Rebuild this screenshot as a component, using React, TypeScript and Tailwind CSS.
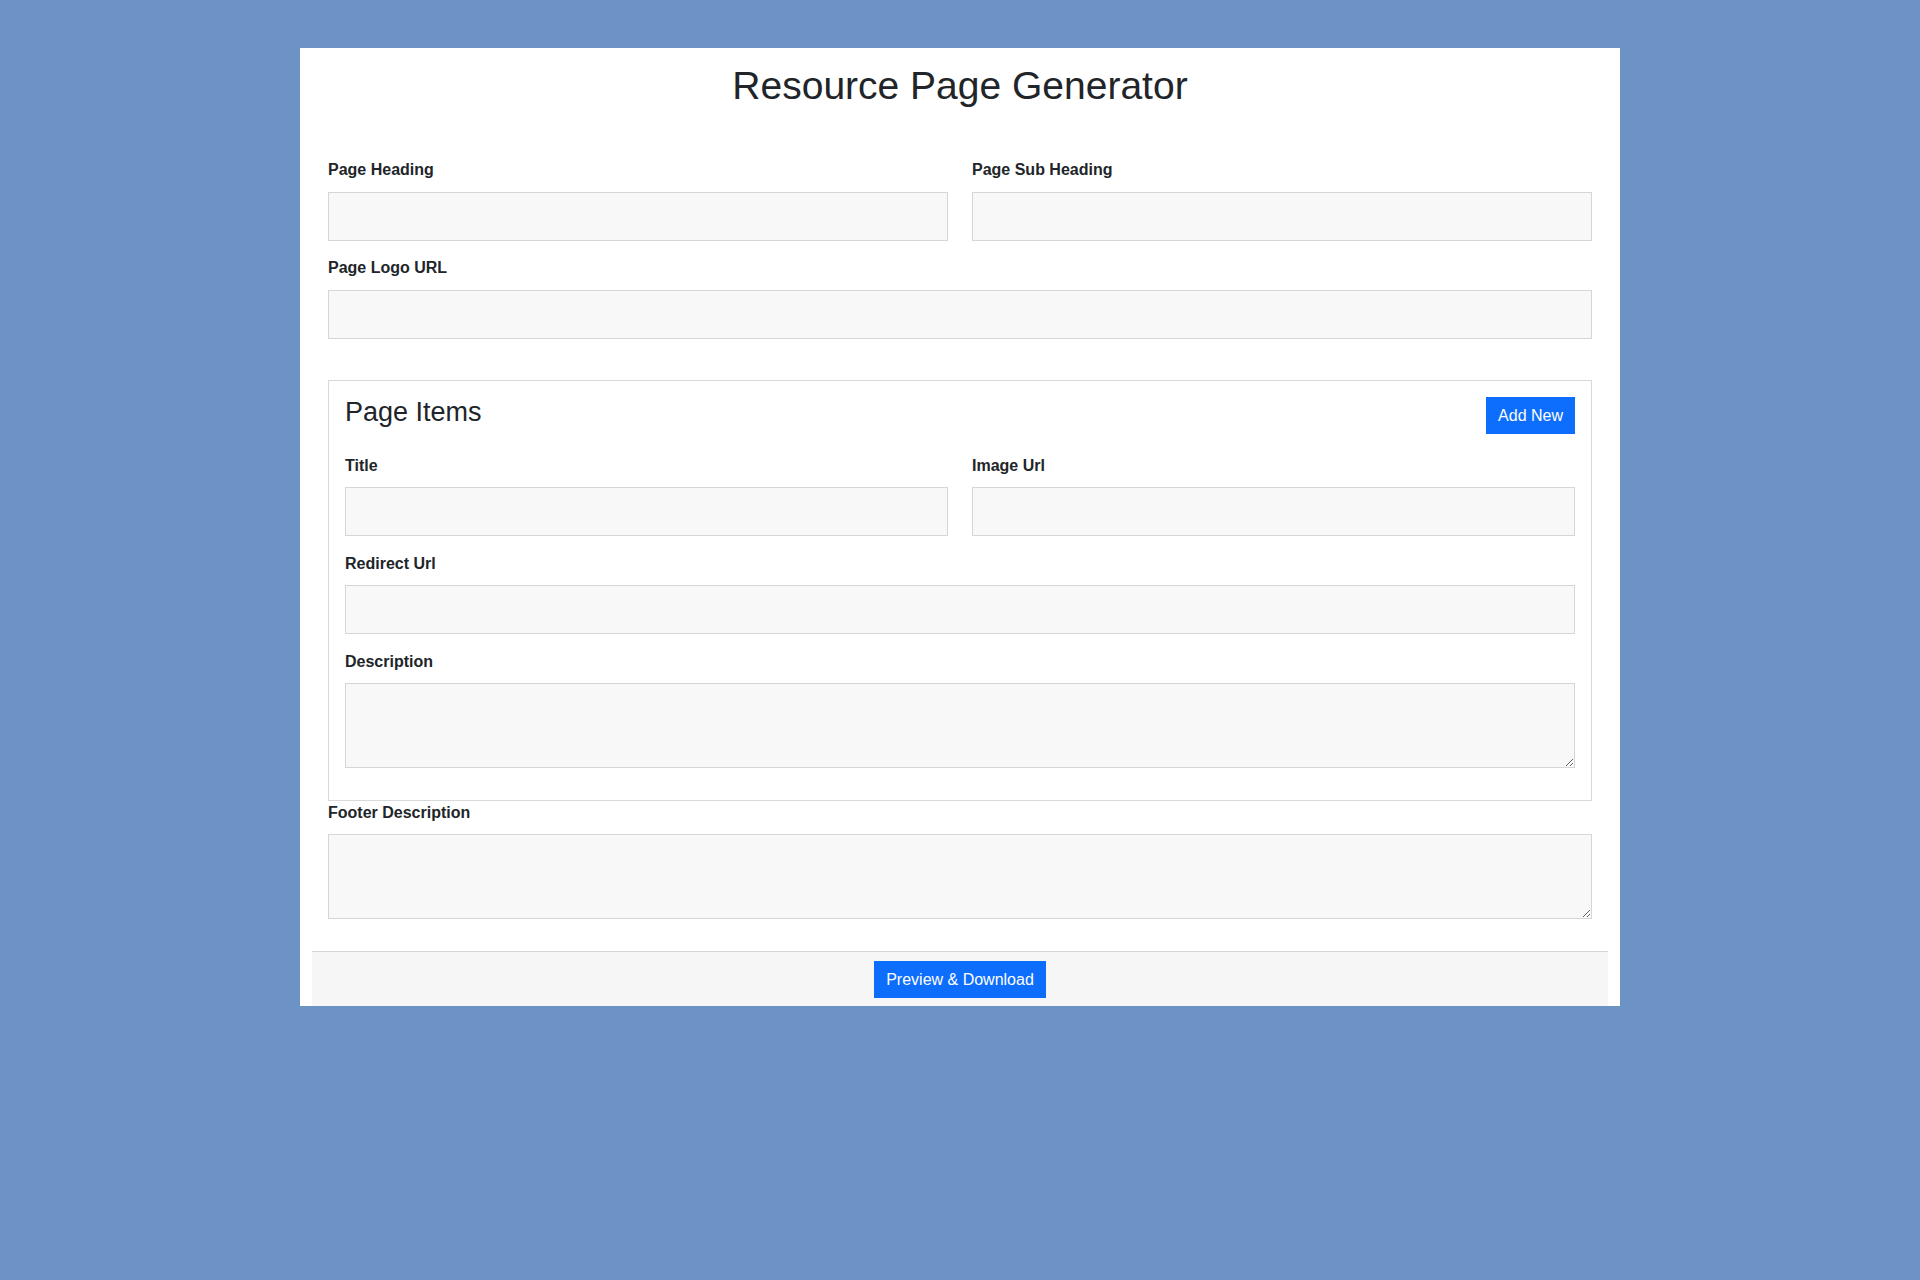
import React from "react";

function Label({ children, mb = "mb-[10px]" }: { children: React.ReactNode; mb?: string }) {
  return (
    <label className={"block text-[16px] leading-[24px] font-bold text-[#212529] " + mb}>
      {children}
    </label>
  );
}

function TextInput() {
  return (
    <input
      type="text"
      className="block w-full h-[49px] bg-[#f8f8f8] border border-[#d3d7db] rounded-none outline-none px-[12px] text-[16px]"
    />
  );
}

function TextArea() {
  return (
    <textarea className="block w-full h-[85px] bg-[#f8f8f8] border border-[#d3d7db] rounded-none outline-none px-[12px] py-[6px] text-[16px]" />
  );
}

export default function App() {
  return (
    <div
      className="min-h-screen w-full bg-[#6d92c6] pt-[48px] text-[#212529]"
      style={{ fontFamily: '"Liberation Sans", Arial, Helvetica, sans-serif' }}
    >
      <div className="mx-auto w-[1320px] bg-white px-[12px] pt-[14px]">
        <h1 className="text-center text-[39px] leading-[48px] font-normal text-[#212529]">
          Resource Page Generator
        </h1>

        <div className="px-[16px] mt-[48px]">
          <div className="grid grid-cols-2 gap-x-[24px]">
            <div className="mb-[15px]">
              <Label>Page Heading</Label>
              <TextInput />
            </div>
            <div className="mb-[15px]">
              <Label>Page Sub Heading</Label>
              <TextInput />
            </div>
          </div>
          <div>
            <Label>Page Logo URL</Label>
            <TextInput />
          </div>

          <div className="mt-[41px] border border-[#d9d9d9] px-[16px] pt-[16px] pb-[32px]">
            <div className="flex items-start justify-between mb-[20px]">
              <h3 className="text-[27px] leading-[34px] font-normal -mt-[2px]">Page Items</h3>
              <button className="h-[37px] px-[12px] bg-[#0d6efd] text-white text-[16px] leading-[24px]">
                Add New
              </button>
            </div>
            <div className="grid grid-cols-2 gap-x-[24px]">
              <div className="mb-[16px]">
                <Label mb="mb-[9px]">Title</Label>
                <TextInput />
              </div>
              <div className="mb-[16px]">
                <Label mb="mb-[9px]">Image Url</Label>
                <TextInput />
              </div>
            </div>
            <div className="mb-[16px]">
              <Label mb="mb-[9px]">Redirect Url</Label>
              <TextInput />
            </div>
            <div>
              <Label mb="mb-[9px]">Description</Label>
              <TextArea />
            </div>
          </div>

          <div className="mb-[32px]">
            <Label mb="mb-[9px]">Footer Description</Label>
            <TextArea />
          </div>
        </div>

        <div className="border-t border-[#d3d7db] bg-[#f6f6f6] h-[55px] flex justify-center pt-[9px]">
          <button className="h-[37px] px-[12px] bg-[#0d6efd] text-white text-[16px] leading-[24px]">
            Preview &amp; Download
          </button>
        </div>
      </div>
    </div>
  );
}
